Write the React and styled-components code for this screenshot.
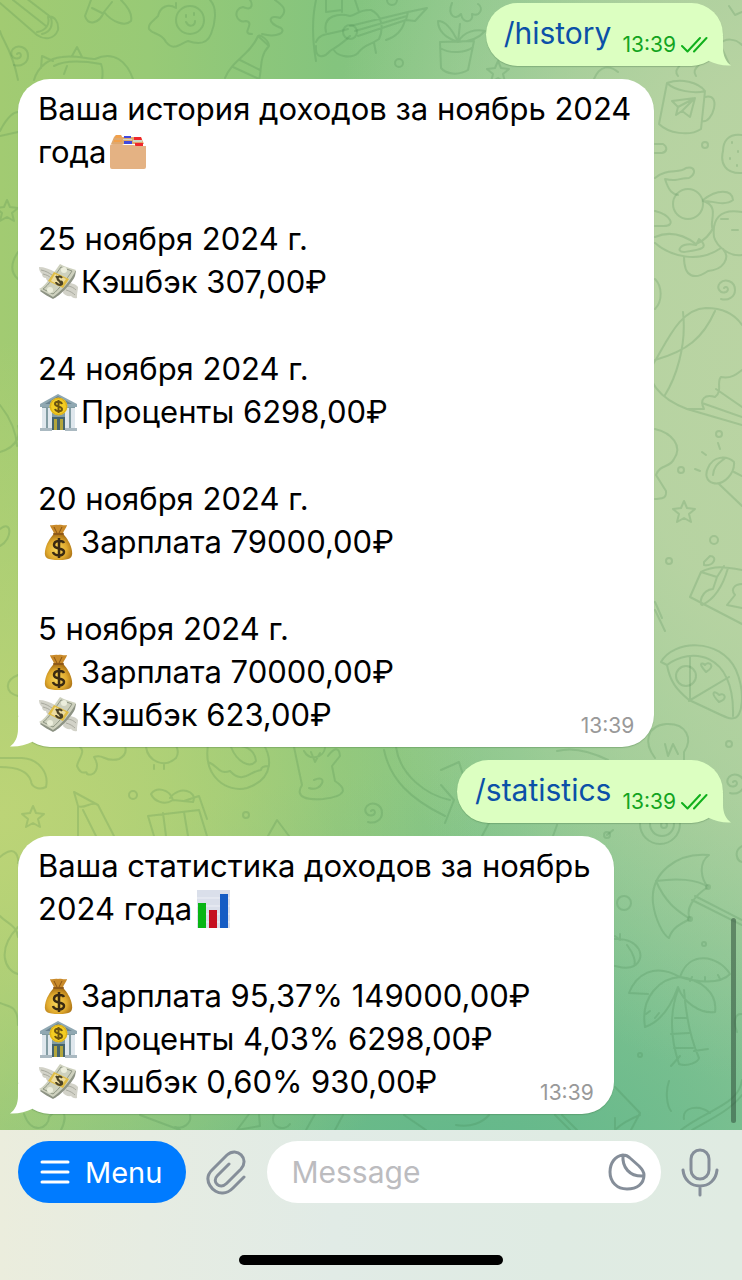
import React from "react";
import styled, { createGlobalStyle } from "styled-components";

const GlobalStyle = createGlobalStyle`
  *, *::before, *::after { box-sizing: border-box; }
  body {
    margin: 0;
    font-family: Inter, "Liberation Sans", sans-serif;
    font-size: 31px;
    line-height: 43px;
    color: #000;
  }
`;

const Page = styled.div`
  min-height: 100vh;
  display: flex;
  flex-direction: column;
`;

const Chat = styled.main`
  position: relative;
  flex: 1;
  display: flex;
  flex-direction: column;
  gap: 13px;
  padding: 3px 19px 16px 18px;
  overflow: hidden;
  background:
    radial-gradient(ellipse 65% 42% at 0% 72%, #bcd477 0%, rgba(188, 212, 119, 0) 100%),
    radial-gradient(ellipse 62% 66% at 104% 30%, #bad4a3 0%, rgba(186, 212, 163, 0.9) 35%, rgba(186, 212, 163, 0) 100%),
    radial-gradient(ellipse 95% 36% at 64% 104%, #62b78b 0%, rgba(98, 183, 139, 0) 100%),
    linear-gradient(90deg, #a2cb72 0%, #98ca76 20%, #84c47e 45%, #86c68c 70%, #9ccb98 100%);
`;

const Wallpaper = styled.svg`
  position: absolute;
  inset: 0;
  width: 100%;
  height: 100%;
  fill: none;
  stroke: rgba(60, 120, 70, 0.19);
  stroke-width: 2;
  stroke-linecap: round;
  stroke-linejoin: round;
`;

const Bubble = styled.article`
  position: relative;
  align-self: ${(p) => (p.$outgoing ? "flex-end" : "flex-start")};
  display: flex;
  flex-direction: ${(p) => (p.$outgoing ? "row" : "column")};
  align-items: ${(p) => (p.$outgoing ? "flex-end" : "stretch")};
  gap: ${(p) => (p.$outgoing ? "11px" : "44px")};
  padding: ${(p) => (p.$outgoing ? "9px 15px 11px 18px" : "8px 20px 11px")};
  border-radius: 32px;
  background: ${(p) => (p.$outgoing ? "#dcffc1" : "#fff")};
  box-shadow: 0 1px 1px rgba(60, 110, 60, 0.3);
`;

const TailSvg = styled.svg`
  position: absolute;
  bottom: 0;
  width: 40px;
  height: 30px;
  fill: ${(p) => (p.$outgoing ? "#dcffc1" : "#fff")};
  ${(p) => (p.$outgoing ? "right: -8px; transform: scaleX(-1);" : "left: -8px;")}
`;

const Tail = ({ outgoing }) => (
  <TailSvg $outgoing={outgoing} viewBox="0 0 40 30" aria-hidden="true">
    <path d="M8 0V12C8 20 5 26 0 29.500C8 30 16 28 22 25V20L14 0Z" />
  </TailSvg>
);

const Block = styled.p`
  margin: 0;
`;

const Line = styled.span`
  display: flex;
  align-items: center;
  padding-right: 3px;
  white-space: nowrap;
`;

const LastRow = styled.span`
  display: flex;
  align-items: flex-end;
  justify-content: space-between;
`;

const Command = styled.a`
  color: #0b50a8;
  font-size: 30px;
  text-decoration: none;
`;

const Time = styled.time`
  color: ${(p) => (p.$outgoing ? "#12a41f" : "#999")};
  font-size: 21px;
  line-height: 20px;
`;

const Status = styled.span`
  display: flex;
  align-items: center;
  gap: 5px;
`;

const Emoji = styled.svg`
  flex: none;
  width: 40px;
  height: 40px;
  margin-left: ${(p) => (p.$trailing ? "2px" : "0")};
  margin-right: 3px;
`;

const ScrollThumb = styled.div`
  position: absolute;
  right: 6px;
  bottom: 7px;
  width: 5px;
  height: 205px;
  border-radius: 3px;
  background: rgba(50, 80, 60, 0.55);
`;

const Composer = styled.footer`
  display: flex;
  flex-direction: column;
  align-items: center;
  gap: 52px;
  padding: 11px 18px 15px;
  background: linear-gradient(90deg, #ebeddd 0%, #e6ece2 20%, #e1ebe6 45%, #dfebe3 75%, #e0ebe2 100%);
`;

const Controls = styled.form`
  align-self: stretch;
  display: flex;
  align-items: center;
  gap: 20px;
  padding-right: 5px;
`;

const MenuButton = styled.button`
  display: flex;
  align-items: center;
  gap: 15px;
  height: 62px;
  padding: 0 24px 0 22px;
  border: 0;
  border-radius: 31px;
  background: #007bff;
  color: #fff;
  font: inherit;
  font-size: 29px;
`;

const IconButton = styled.button`
  flex: none;
  display: flex;
  padding: 0;
  border: 0;
  background: none;
`;

const Field = styled.div`
  flex: 1;
  min-width: 0;
  display: flex;
  align-items: center;
  height: 62px;
  padding: 0 15px 0 24px;
  border-radius: 31px;
  background: #fff;
`;

const MessageInput = styled.input`
  flex: 1;
  min-width: 0;
  padding: 0;
  border: 0;
  outline: 0;
  background: transparent;
  font: inherit;
  font-size: 30px;
  &::placeholder { color: #bcbcbf; opacity: 1; }
`;

const LineIcon = styled.svg`
  display: block;
  fill: none;
  stroke: ${(p) => p.$color || "#858e99"};
  stroke-width: ${(p) => p.$weight || 3};
  stroke-linecap: round;
  stroke-linejoin: round;
`;

const HomeIndicator = styled.div`
  width: 264px;
  height: 10px;
  border-radius: 5px;
  background: #000;
`;

const Checks = () => (
  <LineIcon $color="#10b01c" $weight={2} width="27" height="18" viewBox="0 0 27 18" role="img" aria-label="Read">
    <path d="M1 10L6.500 15.500L19 2M13 15.500L25.500 2" />
  </LineIcon>
);

const MoneyBag = () => (
  <Emoji viewBox="0 0 40 40" role="img" aria-label="💰">
    <defs>
      <radialGradient id="bagFill" cx="0.45" cy="0.6" r="0.6">
        <stop offset="0" stopColor="#f9d75c" />
        <stop offset="0.6" stopColor="#e0aa2e" />
        <stop offset="1" stopColor="#a86f14" />
      </radialGradient>
    </defs>
    <path d="M12 3C15 4 17 2 20 3C23 2 25 4 29 3C28 7 25 9 25 12H16C16 9 13 7 12 3Z" fill="#c98a2a" />
    <path d="M16 5L19 11M24 5L21 11" stroke="#8a5412" fill="none" />
    <path d="M16 12H25C29 16 33 22 34 29C35 36 32 38 21 38C9 38 6 36 7 29C8 22 12 16 16 12Z" fill="url(#bagFill)" />
    <rect x="15" y="11" width="11" height="2" rx="1" fill="#8f5a18" />
    <path d="M26 21C25 18 16 18 16 23C16 28 26 25 26 30C26 35 16 34 15 30M21 16V36" fill="none" stroke="#3a2a12" strokeWidth="2.500" />
  </Emoji>
);

const MoneyWings = () => (
  <Emoji viewBox="0 0 40 40" role="img" aria-label="💸">
    <path d="M1 5C6 5 12 7 17 10L13 20C10 20 8 18 8 16C5 16 4 14 4 12C2 10 1 8 1 5Z" fill="#d2d2c8" />
    <path d="M3 8C8 9 11 11 14 13M5 12C9 13 11 14 13 16" fill="none" stroke="#a9aa9f" />
    <path d="M27 20C33 21 38 22 40 25C40 28 39 30 39 36C36 37 34 35 33 34C30 35 27 33 25 31Z" fill="#d2d2c8" />
    <path d="M29 24C33 24 36 26 38 28M28 28C32 29 35 31 37 33" fill="none" stroke="#a9aa9f" />
    <path d="M2 29L22 5C27 8 33 9 38 9L37 14C34 21 22 34 15 37C11 35 6 32 2 29Z" fill="#8d9384" />
    <path d="M1 27C8 24 16 10 22 2C27 5 33 6 38 8C34 17 22 31 15 35C11 32 6 30 1 27Z" fill="#ced1be" />
    <path d="M5 27C10 24 18 12 23 5L34 9C29 17 20 28 15 32Z" fill="none" stroke="#8e9683" />
    <circle cx="26" cy="8" r="3" fill="#eceedd" />
    <circle cx="12" cy="28" r="3" fill="#eceedd" />
    <path d="M16 10L31 17L25 26L10 19Z" fill="#e0bd45" />
    <path d="M17 12L28 17L23 24L13 19Z" fill="#ecdca0" />
    <path d="M24 16C22 13 18 15 20 18C22 21 25 18 24 22C22 24 18 22 18 20M18 14L24 23" fill="none" stroke="#4b4226" strokeWidth="2" />
  </Emoji>
);

const Bank = () => (
  <Emoji viewBox="0 0 40 40" role="img" aria-label="🏦">
    <path d="M4 14H37V37H4Z" fill="#829ca3" />
    <path d="M20 2L39 12V15H2V12Z" fill="#90a8b2" />
    <path d="M20 4L34 12H7Z" fill="#6a838f" />
    <path d="M14 25H27V38H14Z" fill="#44636d" />
    <path d="M16 27H19V38H16ZM22 27H25V38H22Z" fill="#b3a63b" />
    <path d="M4 16H8V36H4ZM10 16H14V36H10ZM27 16H31V36H27ZM33 16H37V36H33Z" fill="#dfe7ed" />
    <path d="M2 36H14V39H2ZM27 36H39V39H27Z" fill="#aab9c1" />
    <circle cx="20.500" cy="14.500" r="9" fill="#f3cd22" />
    <circle cx="20.500" cy="14.500" r="8" fill="none" stroke="#d9a916" />
    <path d="M24 12C23 9 17 9 17 12C17 15 24 14 24 17C24 20 18 20 17 17M20.500 8V21" fill="none" stroke="#6b5410" strokeWidth="2" />
  </Emoji>
);

const Dividers = () => (
  <Emoji $trailing viewBox="0 0 40 40" role="img" aria-label="🗂️">
    <path d="M6 5L8 3H13L14 5H33L36 12H3Z" fill="#dfa86e" />
    <path d="M8 3H13L14 6H7Z" fill="#f2a04a" />
    <path d="M6 8H14V10H6Z" fill="#f2a04a" />
    <path d="M16 4H23V6H16ZM16 9H24V12H16Z" fill="#4148dd" />
    <path d="M15 7H24V8H15ZM25 8H34V10H25Z" fill="#cfd6c4" />
    <path d="M26 5H33L34 8H26ZM27 11H35V14H27Z" fill="#f0262b" />
    <path d="M2 14Q2 12 5 12H14L16 13H26L28 14H38V35Q38 37 36 37H4Q2 37 2 35Z" fill="#e4b283" />
  </Emoji>
);

const BarChart = () => (
  <Emoji $trailing viewBox="0 0 40 40" role="img" aria-label="📊">
    <rect x="3" y="1" width="33" height="38" fill="#dadfea" />
    <path d="M3 9H36M3 17H36M3 25H36M3 33H36" stroke="#eef0f6" />
    <rect x="4" y="14" width="8" height="25" fill="#08b514" />
    <rect x="15" y="21" width="8" height="18" fill="#c50f1f" />
    <rect x="26" y="5" width="8" height="34" fill="#155cc4" />
  </Emoji>
);

const EMOJI = { bag: MoneyBag, wings: MoneyWings, bank: Bank };

const Entry = ({ icon, children }) => {
  const Icon = EMOJI[icon];
  return (
    <Line>
      <Icon />
      {children}
    </Line>
  );
};

const Incoming = ({ children, last }) => (
  <Bubble>
    <Tail />
    {children}
    <Block>
      {last.lines}
      <LastRow>
        {last.final}
        <Time dateTime="13:39">13:39</Time>
      </LastRow>
    </Block>
  </Bubble>
);

const Outgoing = ({ command }) => (
  <Bubble $outgoing>
    <Tail outgoing />
    <Command href={"#" + command}>/{command}</Command>
    <Status>
      <Time $outgoing dateTime="13:39">13:39</Time>
      <Checks />
    </Status>
  </Bubble>
);

const star = "M0 -11L3 -4L11 -3L5 2L7 10L0 6L-7 10L-5 2L-11 -3L-3 -4Z";
const swirl = "M0 0C3 -3 6 2 2 4C-4 6 -8 0 -4 -5C1 -10 11 -7 11 2C11 9 4 13 -3 11";

const Doodles = () => (
  <Wallpaper viewBox="0 0 742 1130" preserveAspectRatio="xMidYMin slice" aria-hidden="true">
    {/* pencil, rocket tail, fried egg */}
    <path d="M0 3L37 35M13 0L46 26M22 -5L52 18M37 35C44 40 54 40 58 30C59 22 54 15 48 17C50 24 46 31 37 32M42 34C51 32 53 25 51 18" />
    <path d="M91 0L85 16C88 26 99 24 104 12L112 2M104 12C112 22 125 27 131 21C133 13 126 5 121 0M92 8L102 13" />
    <path d="M176 3V8C168 3 160 7 158 16C152 22 148 24 149 29C153 35 161 32 166 42C174 52 181 43 188 41C199 45 207 44 211 34C215 24 218 8 210 0" />
    <circle cx="190" cy="20" r="14" />
    <path d="M186 15V17M194 13V15M186 22C189 28 195 26 195 21" />
    {/* bottle */}
    <path d="M225 78C232 60 250 55 258 36L269 46C259 56 262 70 259 80M258 36C261 34 269 41 269 46M233 67L259 79M240 60L260 70M252 34C240 34 256 23 246 21C236 24 232 9 243 7C254 12 252 2 250 0M262 34C278 38 286 32 281 28C265 22 270 14 280 18C289 10 282 5 275 0" />
    <path transform="translate(17 54)" d={swirl} />
    {/* cat */}
    <path d="M34 80C38 66 50 58 62 57C74 55 88 59 95 59C114 50 127 62 133 79M41 68L42 56L53 61M72 56L77 47L82 57M54 66C65 60 84 61 101 64C103 69 103 74 102 80M67 66L64 74" />
    {/* guitar player */}
    <path d="M316 0C312 18 312 38 316 61M316 42C320 32 330 35 348 29M326 32C322 15 340 13 350 16C356 15 360 9 371 10C382 15 384 28 379 39C369 46 364 44 358 53C350 60 336 55 334 50M316 46C315 58 323 59 330 51C340 45 346 40 350 36M350 26L408 12L406 20L358 36M355 31L407 16M408 12L427 8L415 21L406 20M374 43L376 53M386 40C398 36 403 29 405 20M326 0V12M342 0V12M326 12L342 10M355 0L359 12" />
    <circle cx="350" cy="32" r="7" />
    <circle cx="399" cy="63" r="4" />
    <circle cx="392" cy="0" r="5" />
    {/* potted flower */}
    <path d="M440 42L474 41L468 70C458 76 446 74 441 68ZM440 48C450 54 466 53 473 47M458 42C452 29 446 21 438 21C438 31 446 38 458 42C464 31 476 29 485 31C478 39 467 42 458 42L460 24M452 3C447 15 455 21 461 14C463 25 474 22 472 14C480 17 484 8 478 4" />
    <path transform="translate(498 72)" d={star} />
    <path d="M594 79C600 65 610 65 618 72M729 6L735 15L742 12M729 64L720 44C725 38 735 38 742 45" />
    {/* telegram mug */}
    <path d="M667 83C681 78 698 82 705 91L701 129C689 137 668 133 659 124ZM667 83C675 91 695 94 705 91M705 97C722 92 713 124 702 121M672 101L695 98L690 117L682 111L676 115L678 107ZM678 107L695 98L682 111M678 76C672 68 684 67 679 60M696 76C690 68 704 65 699 60" />
    <circle cx="705" cy="145" r="3" />
    <path d="M655 144H663C668 147 667 152 662 153H655M742 135C728 133 723 142 723 151C720 163 725 174 742 173M732 142V143M738 151V152M730 158V159M737 165V166" />
    {/* sleeping dog */}
    <circle cx="688" cy="204" r="15" />
    <path d="M655 178C666 168 680 174 686 168C695 166 697 173 689 178C674 179 676 182 665 179C669 192 673 194 678 195M655 211C671 215 676 226 664 226H655M703 200C717 189 732 189 733 200C724 207 710 200 703 201C721 206 708 223 713 230M655 237C671 230 684 235 696 244C706 240 711 233 714 226M742 212C719 208 712 220 714 237C717 247 730 257 742 255M655 243C670 256 698 264 721 248M684 257C684 278 695 280 708 271C723 270 731 258 723 249M721 219H728M732 230H738M696 245C680 242 675 252 684 252C698 250 711 249 699 239Z" />
    <path transform="translate(724 288)" d={swirl} />
    <path d="M655 279C662 286 663 301 655 309" />
    {/* ball */}
    <path d="M655 361C669 337 681 309 706 308C729 308 738 319 742 325M655 361C642 380 661 399 687 409L742 425M683 312C687 347 675 379 665 395M655 360C687 351 703 338 715 311M687 409L704 409C699 399 705 394 715 397C723 391 716 382 721 377C731 379 737 374 742 370M716 389L742 407M702 403L742 417" />
    <path d="M655 429C672 433 683 446 674 459C670 468 660 464 656 475L666 491C667 500 660 498 655 499" />
    <circle cx="719" cy="434" r="3" />
    <circle cx="681" cy="470" r="3" />
    <path transform="translate(684 512)" d={star} />
    <circle cx="714" cy="540" r="4" />
    <circle cx="669" cy="561" r="3" />
    <path d="M708 468C713 456 726 455 734 462C735 473 724 486 713 483C706 481 705 474 708 468ZM713 475C714 464 721 462 725 458M734 472L742 476M719 484L742 506M702 452L706 455M718 443L720 449M695 469L700 471" />
    {/* gift */}
    <path d="M690 597L701 572C714 565 726 567 742 570M690 597L742 624M701 572L717 577L713 589C701 590 699 604 702 605C713 600 722 589 728 568M717 577L724 566M742 584C735 584 730 589 735 595L727 605L742 608M704 562L710 556C718 556 714 567 704 565ZM655 602L662 618M655 610L665 631" />
    {/* pizza */}
    <path d="M661 662C673 640 720 637 736 670C746 693 742 718 734 718C729 720 724 716 689 700C677 690 670 682 667 665ZM667 665C690 647 735 651 733 716M690 656V700L729 677M689 701L729 677" />
    <circle cx="686" cy="676" r="10" />
    <path d="M706 672C696 661 704 663 705 665C708 660 717 666 706 672ZM719 702C709 692 715 690 719 695C725 692 728 699 719 702Z" />
    {/* light bulb */}
    <path d="M655 758C643 742 647 726 666 724C687 723 693 739 684 752L684 763H665M665 744L668 756L673 744L678 754" />
    <circle cx="729" cy="744" r="3" />
    <path transform="translate(733 782)" d={swirl} />
    <circle cx="660" cy="824" r="20" />
    <circle cx="662" cy="824" r="12" />
    <circle cx="664" cy="825" r="3" />
    {/* middle band: rainbow, chick, donut, bear */}
    <path d="M0 758H22C40 759 49 774 46 787C38 791 31 786 31 781C28 771 17 767 0 767M80 747C86 752 78 759 77 766C82 778 87 769 87 774C94 777 101 768 94 757C104 753 104 763 119 759C127 755 126 749 125 746M146 747C148 761 164 769 176 758C180 752 176 746 176 746M154 765V769M164 765V769" />
    <path d="M208 745C203 777 227 793 247 788C277 778 270 753 263 744M208 762C218 765 218 775 230 771C243 785 250 771 261 770C261 766 266 766 269 766M231 747C237 762 250 769 256 761C255 750 246 747 241 746" />
    <path d="M294 747L302 785C294 798 308 800 323 799C347 796 347 789 335 781L332 766L340 756C339 745 333 749 328 756M304 751C310 762 324 757 325 748M311 752L315 762L320 753M314 780C329 773 322 793 309 788" />
    <path transform="translate(33 817)" d={star} />
    <path transform="translate(371 811)" d={swirl} />
    <circle cx="133" cy="795" r="4" />
    <circle cx="246" cy="815" r="3" />
    {/* crayon and present */}
    <path d="M78 836L78 806L74 792L98 805L114 836M78 806C84 810 92 800 98 805M83 810L96 836" />
    <path d="M148 816L199 810L207 836M148 816L154 836M163 813L166 836M184 812L188 836M199 796L207 819M170 798C179 785 198 791 193 802L173 800C164 806 154 801 151 794C156 787 169 788 173 800M199 796L184 801M268 836L277 820L289 836" />
    <path d="M384 750C390 779 410 799 445 816M396 747C400 775 426 795 450 800M441 770L459 762L464 778M441 785L454 800L445 823M557 751C572 747 590 751 608 760M482 836L489 823M553 836L557 825M613 830L607 835" />
    <circle cx="607" cy="835" r="3" />
    {/* umbrella */}
    <path d="M709 855C677 852 650 873 653 903C655 919 663 935 669 938C672 928 680 924 690 919C685 909 694 896 708 887C701 879 698 863 709 855ZM656 881C676 878 697 879 708 887M656 881C666 904 678 911 690 919M692 900L742 925M695 896L742 920" />
    <circle cx="708" cy="887" r="2" />
    <circle cx="690" cy="919" r="2" />
    <circle cx="704" cy="944" r="2" />
    <circle cx="624" cy="903" r="7" />
    <path d="M615 939C640 938 647 958 634 966C626 970 617 966 615 966M620 934V940L615 936M627 945C634 954 636 962 634 966M742 846C733 851 737 861 742 862" />
    {/* palm */}
    <path d="M680 977C689 950 718 955 730 974C720 985 696 982 680 977C654 962 636 975 629 993L648 994M680 977C661 978 640 996 645 1027C660 1022 670 1009 678 987C683 1002 700 1014 715 1012C718 992 699 979 680 977ZM678 990C669 1014 671 1040 679 1064C688 1067 698 1062 699 1058C691 1040 686 1016 684 990M675 1018H686M671 1034L689 1033M674 1048L693 1048M680 1056L671 1066M694 1051L708 1049M690 981L692 977M705 981V977M720 979L718 975M650 1011L646 1014M659 1013L655 1018M669 1081C665 1092 667 1106 671 1111" />
    <circle cx="640" cy="1055" r="2" />
    <path d="M742 1014C735 1013 733 1022 737 1032M742 1080C739 1105 706 1110 681 1130M742 1095C730 1110 715 1117 692 1130M684 1119C682 1107 699 1104 710 1113M615 1087L640 1113L631 1130M615 1130C620 1125 630 1119 640 1115M615 1130V1118" />
    {/* left edge and bottom strip */}
    <path d="M0 31C2 40 12 49 18 80M0 131C8 115 15 112 18 112M0 136L18 132M0 405C8 415 16 430 17 446M0 452C20 446 20 432 18 426M0 529C12 519 13 539 0 546M18 252C10 264 11 273 18 279M18 675C5 680 4 692 18 696M0 857C17 842 19 860 18 863M0 916C6 923 17 925 18 937M0 1003C8 1007 18 1004 18 1025M18 927C-4 950 5 971 18 974" />
    <path transform="translate(7 211)" d={star} />
    <path d="M24 1114C32 1136 49 1128 49 1117C60 1104 70 1112 61 1130M140 1115L180 1130M190 1115C192 1123 183 1130 175 1127M249 1114L237 1130L260 1126L259 1115M274 1114C269 1128 285 1132 290 1124M315 1114L306 1130M343 1115L335 1130M404 1115L426 1130M456 1125C471 1128 483 1122 489 1115M555 1115L570 1130M562 1115L577 1130" />
  </Wallpaper>
);

export default function App() {
  return (
    <Page>
      <GlobalStyle />
      <Chat>
        <Doodles />
        <Outgoing command="history" />
        <Incoming
          last={{
            lines: (
              <>
                <Line>5 ноября 2024 г.</Line>
                <Entry icon="bag">Зарплата 70000,00₽</Entry>
              </>
            ),
            final: <Entry icon="wings">Кэшбэк 623,00₽</Entry>,
          }}
        >
          <Block>
            <Line>Ваша история доходов за ноябрь 2024</Line>
            <Line>года<Dividers /></Line>
          </Block>
          <Block>
            <Line>25 ноября 2024 г.</Line>
            <Entry icon="wings">Кэшбэк 307,00₽</Entry>
          </Block>
          <Block>
            <Line>24 ноября 2024 г.</Line>
            <Entry icon="bank">Проценты 6298,00₽</Entry>
          </Block>
          <Block>
            <Line>20 ноября 2024 г.</Line>
            <Entry icon="bag">Зарплата 79000,00₽</Entry>
          </Block>
        </Incoming>
        <Outgoing command="statistics" />
        <Incoming
          last={{
            lines: (
              <>
                <Entry icon="bag">Зарплата 95,37% 149000,00₽</Entry>
                <Entry icon="bank">Проценты 4,03% 6298,00₽</Entry>
              </>
            ),
            final: <Entry icon="wings">Кэшбэк 0,60% 930,00₽</Entry>,
          }}
        >
          <Block>
            <Line>Ваша статистика доходов за ноябрь</Line>
            <Line>2024 года<BarChart /></Line>
          </Block>
        </Incoming>
        <ScrollThumb />
      </Chat>
      <Composer>
        <Controls>
          <MenuButton type="button">
            <LineIcon $color="#fff" width="30" height="24" viewBox="0 0 30 24" aria-hidden="true">
              <path d="M2 2H28M2 12H28M2 22H28" />
            </LineIcon>
            Menu
          </MenuButton>
          <IconButton type="button" aria-label="Attach">
            <LineIcon width="41" height="46" viewBox="0 0 41 46">
              <path d="M23 15L11.500 26.500C5 33 14 41 20.500 34.500L35 20C44 10 31 -3 21 6L6 21C-4 31 7 45 17 44C21 44 24 42 27 39L38 28" />
            </LineIcon>
          </IconButton>
          <Field>
            <MessageInput type="text" placeholder="Message" aria-label="Message" />
            <IconButton type="button" aria-label="Stickers">
              <LineIcon width="38" height="38" viewBox="0 0 38 38">
                <path d="M15 2C7 3 2 10 2 19C2 29 9 36 19 36C29 36 36 31 36 22C36 19 34 16 31 13L22 5C20 3 18 2 15 2C14 14 21 24 36 23" />
              </LineIcon>
            </IconButton>
          </Field>
          <IconButton type="button" aria-label="Record voice message">
            <LineIcon width="38" height="50" viewBox="0 0 38 50">
              <rect x="10" y="3" width="18" height="29" rx="9" />
              <path d="M2 23C3 33 10 39 19 39C28 39 35 33 36 23M19 39V48" />
            </LineIcon>
          </IconButton>
        </Controls>
        <HomeIndicator />
      </Composer>
    </Page>
  );
}
